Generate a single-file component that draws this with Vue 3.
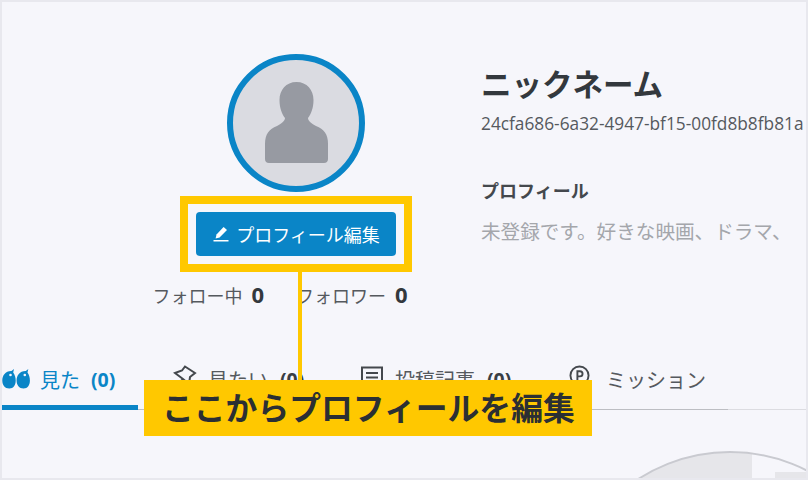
<template>
  <div class="page">
    <section class="profile">
      <div class="side">
        <div class="avatar">
          <svg width="63" height="81" viewBox="0 0 63 81">
            <path class="person" d="M31.500 0C21 0 14.500 8 14.500 18 14.500 26 17 32 20 36 20 39 17 41 12 44 4 47 0 52 0 62V77C0 79.500 1.500 81 4 81H59C61.500 81 63 79.500 63 77V62C63 52 59 47 51 44 46 41 43 39 43 36 46 32 48.500 26 48.500 18 48.500 8 42 0 31.500 0z" />
          </svg>
        </div>
        <div class="edit-frame">
          <button class="edit-btn">
            <svg width="16" height="16" viewBox="0 0 16 16">
              <path d="M10.600 1l3.400 2.900-7.400 7.700-4 1 .9-4z" />
              <rect x="0.500" y="14" width="15" height="1.500" />
            </svg>
            プロフィール編集
          </button>
        </div>
        <div class="stats">
          <span class="stat">フォロー中<b>0</b></span>
          <span class="stat">フォロワー<b>0</b></span>
        </div>
      </div>
      <div class="info">
        <h1>ニックネーム</h1>
        <p class="uid">24cfa686-6a32-4947-bf15-00fd8b8fb81a</p>
        <h2>プロフィール</h2>
        <p class="bio">未登録です。好きな映画、ドラマ、</p>
      </div>
    </section>

    <nav class="tabs">
      <div class="tab active">
        <svg width="28" height="20" viewBox="0 0 28 20">
          <path class="fill" d="M9.500 2l2.500-2-.8 3.500C12.800 5.500 13.700 8.500 13.700 11.500 13.700 16 11.500 19.500 7.300 19.500 2.800 19.500.3 16 .3 11.500.3 6.500 3.500 1.800 9.500 2z" />
          <path class="fill" d="M23.800 2l2.500-2-.8 3.500C27.100 5.500 27.900 8.500 27.900 11.500c0 4.500-2.200 8-6.300 8-4.500 0-7-3.500-7-8 0-5 3.200-9.700 9.200-9.500z" />
          <circle class="pupil" cx="8.500" cy="6" r="1.300" />
          <circle class="pupil" cx="22.800" cy="6" r="1.300" />
        </svg>
        <span>見た</span><b>(0)</b>
      </div>
      <div class="tab">
        <svg class="raised" width="24" height="24" viewBox="0 0 24 24">
          <path class="line" d="M2 8l7-2.500L12 1.500 22 8l-5 4-1 7-6-5zM10 14l-7 7" />
        </svg>
        <span>見たい</span><b>(0)</b>
      </div>
      <div class="tab">
        <svg class="raised" width="24" height="24" viewBox="0 0 24 24">
          <path class="line" d="M2 2.500h20v19H2zM6 8h12M6 12.500h12M6 17h12" />
        </svg>
        <span>投稿記事</span><b>(0)</b>
      </div>
      <div class="tab">
        <svg class="raised-more" width="21" height="21" viewBox="0 0 22 22">
          <circle class="line" cx="11" cy="11" r="9.500" />
          <path class="line" d="M8.800 16V6.500h2.700a2.600 2.600 0 0 1 0 5.400H8.800" />
        </svg>
        <span>ミッション</span>
      </div>
    </nav>

    <div class="ghost-avatar"></div>

    <div class="callout-line"></div>
    <div class="callout">ここからプロフィールを編集</div>
  </div>
</template>

<script setup>
</script>

<style>
body {
  margin: 0;
}
</style>

<style scoped>
.page {
  position: relative;
  width: 808px;
  height: 480px;
  box-sizing: border-box;
  border: 2px solid #e8e8ee;
  background: #f6f6fb;
  overflow: hidden;
  font-family: "Open Sans", "Noto Sans CJK JP", sans-serif;
  color: #33383d;
}

.profile {
  display: flex;
  height: 358px;
  box-sizing: border-box;
  padding: 52px 0 0 178px;
}

.side {
  display: flex;
  flex-direction: column;
  align-items: center;
  width: 232px;
}

.avatar {
  box-sizing: border-box;
  width: 138px;
  height: 138px;
  border: 6px solid #0a85c7;
  border-radius: 50%;
  background: #dadbe1;
  display: flex;
  align-items: flex-end;
  justify-content: center;
  padding-bottom: 23px;
}

.person {
  fill: #979aa2;
}

.edit-frame {
  box-sizing: border-box;
  width: 232px;
  height: 76px;
  margin-top: 4px;
  border: 8px solid #ffc800;
  display: flex;
  align-items: center;
  justify-content: center;
}

.edit-btn {
  width: 200px;
  height: 44px;
  border: 0;
  border-radius: 4px;
  background: #0a85c7;
  color: #fff;
  font-family: inherit;
  font-size: 18px;
  font-weight: 400;
  display: flex;
  align-items: center;
  justify-content: center;
  gap: 7px;
  padding: 0 0 0 1px;
}

.edit-btn svg {
  fill: #fff;
}

.stats {
  display: flex;
  gap: 32px;
  margin: 9px 32px 0 0;
  font-size: 18px;
  line-height: 26px;
  color: #55595e;
  white-space: nowrap;
}

.stat b {
  margin-left: 9px;
  font-size: 22px;
  line-height: 26px;
  color: #33383d;
}

.info {
  margin-left: 69px;
  padding-top: 11px;
}

h1 {
  margin: 0;
  font-size: 30.500px;
  line-height: 38px;
  font-weight: 700;
  white-space: nowrap;
}

.uid {
  margin: 9px 0 0;
  font-size: 17.300px;
  line-height: 24px;
  color: #55595e;
  white-space: nowrap;
}

h2 {
  margin: 42px 0 0;
  font-size: 18px;
  line-height: 26px;
  font-weight: 700;
  color: #44484d;
}

.bio {
  margin: 14px 0 0;
  font-size: 19.600px;
  line-height: 28px;
  color: #a4a6ab;
  white-space: nowrap;
}

.tabs {
  display: flex;
  height: 49px;
  border-bottom: 1px solid;
  border-image: linear-gradient(to right, #bdbec3 725px, #dcdce1 725px) 1;
}

.tab {
  display: flex;
  align-items: center;
  gap: 11px;
  box-sizing: border-box;
  height: 50px;
  padding: 0 0 12px 35px;
  font-size: 20px;
  color: #55595e;
  white-space: nowrap;
}

.tab b {
  font-size: 19.500px;
  color: #3a3e44;
  margin-left: 1px;
}

.tab:nth-child(2) {
  width: 187px;
}

.tab:nth-child(3) {
  width: 209px;
}

.tab:nth-child(4) {
  gap: 16px;
}

.raised {
  margin-bottom: 4px;
}

.raised-more {
  margin-bottom: 8px;
}

.tab.active {
  width: 136px;
  padding-left: 0;
  gap: 10px;
  color: #0a85c7;
  border-bottom: 5px solid #0a85c7;
  padding-bottom: 7px;
}

.tab.active b {
  color: #0a85c7;
}

.fill {
  fill: #0a85c7;
}

.pupil {
  fill: #f6f6fb;
}

.line {
  fill: none;
  stroke: #44484d;
  stroke-width: 2;
}

.ghost-avatar {
  position: absolute;
  left: 558px;
  top: 449px;
  width: 340px;
  height: 340px;
  box-sizing: border-box;
  border: 2px solid #c9cad0;
  border-radius: 50%;
  background:
    linear-gradient(#e6e6ea, #e6e6ea) 213px 19px / 40px 30px no-repeat,
    linear-gradient(#e6e6ea, #e6e6ea) 0 0 / 190px 100% no-repeat;
}

.callout-line {
  position: absolute;
  left: 296px;
  top: 270px;
  width: 4px;
  height: 110px;
  background: #ffc800;
}

.callout {
  position: absolute;
  left: 142px;
  top: 378px;
  width: 448px;
  height: 56px;
  box-sizing: border-box;
  padding-left: 18px;
  background: #ffc800;
  color: #2b2f33;
  font-size: 31.800px;
  line-height: 56px;
  font-weight: 700;
  white-space: nowrap;
}
</style>
